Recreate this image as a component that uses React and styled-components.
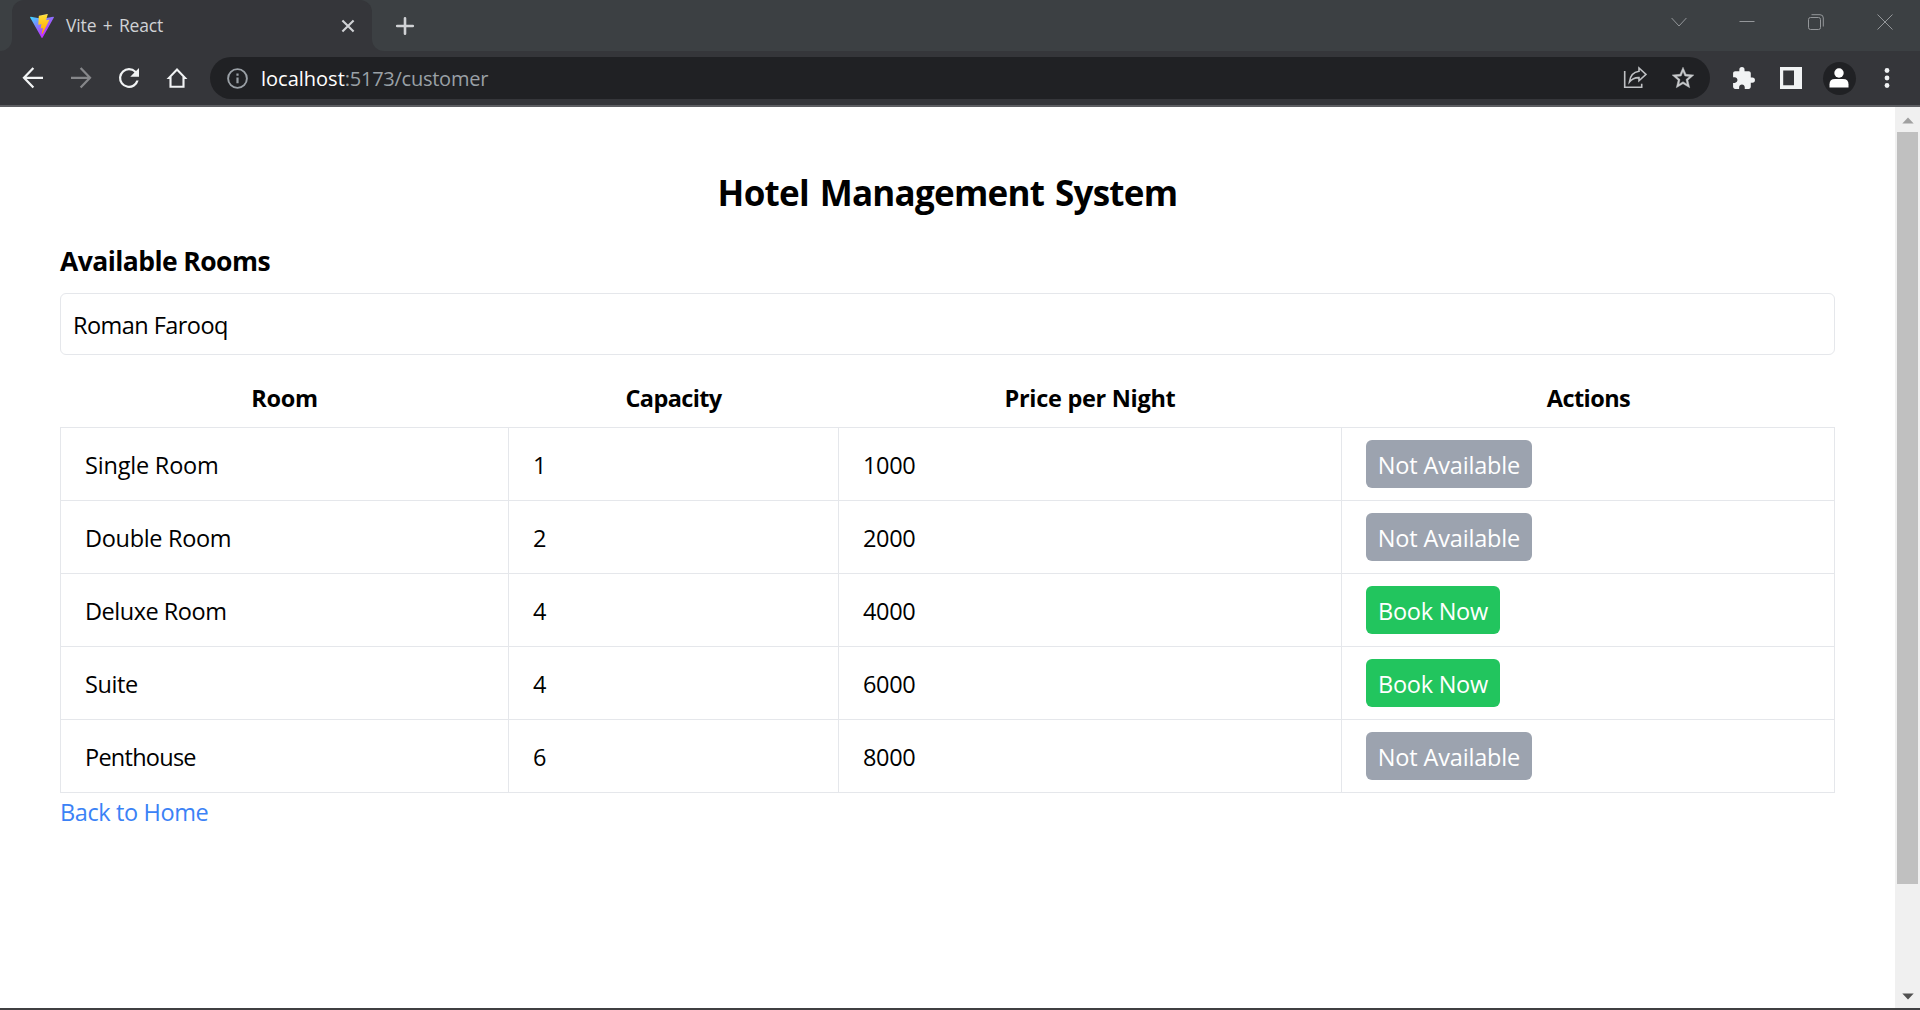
import React from 'react';
import styled, { createGlobalStyle } from 'styled-components';

const GlobalStyle = createGlobalStyle`
  *, *::before, *::after { box-sizing: border-box; }
  body {
    margin: 0;
    overflow: hidden;
    background: #fff;
    color: #000;
    font-family: "Open Sans", "Noto Sans", sans-serif;
  }
`;

const Window = styled.div`
  display: flex;
  flex-direction: column;
  height: 1010px;
  border-bottom: 2px solid #404042;
`;

/* ---------- tab strip ---------- */

const TabStrip = styled.header`
  display: flex;
  height: 51px;
  flex: none;
  background: #3c4043;
`;

const TabEdge = styled.div`
  width: 12px;
  background: #35363a;
  &::before {
    content: "";
    display: block;
    height: 100%;
    background: #3c4043;
    border-radius: ${(p) => (p.$side === 'left' ? '0 0 12px 0' : '0 0 0 12px')};
  }
`;

const Tab = styled.div`
  display: flex;
  align-items: center;
  width: 360px;
  padding: 0 15px 0 18px;
  background: #35363a;
  border-radius: 12px 12px 0 0;
`;

const TabTitle = styled.span`
  flex: 1;
  margin-left: 12px;
  padding-bottom: 1px;
  color: #d0d2d5;
  font-size: 17.5px;
  letter-spacing: -0.15px;
  word-spacing: 2px;
  line-height: 24px;
`;

const NewTab = styled.div`
  display: flex;
  align-items: center;
  margin-left: 10px;
`;

const WindowControls = styled.div`
  display: flex;
  height: 43px;
  margin-left: auto;
  padding-right: 1px;
`;

const ControlSlot = styled.div`
  display: flex;
  align-items: center;
  justify-content: center;
  width: 68.7px;
`;

/* ---------- toolbar ---------- */

const Toolbar = styled.div`
  display: flex;
  align-items: center;
  flex: none;
  height: 56px;
  padding: 0 9px 0 18px;
  background: #35363a;
  border-bottom: 2px solid #5d5e62;
`;

const NavGroup = styled.nav`
  display: flex;
  gap: 18px;
  margin-right: 18px;
`;

const AddressBar = styled.div`
  display: flex;
  align-items: center;
  flex: 1;
  height: 42px;
  padding: 0 14px 0 16px;
  border-radius: 21px;
  background: #202124;
`;

const Url = styled.div`
  flex: 1;
  margin-left: 11px;
  padding-top: 2px;
  color: #9aa0a6;
  font-size: 20px;
  line-height: 28px;
  letter-spacing: -0.25px;
`;

const Host = styled.span`
  color: #fff;
  letter-spacing: 0;
`;

const AddressActions = styled.div`
  display: flex;
  align-items: center;
  gap: 23px;
`;

const ToolGroup = styled.div`
  display: flex;
  margin-left: 9px;
`;

const ToolSlot = styled.div`
  display: flex;
  align-items: center;
  justify-content: center;
  width: 48px;
  height: 42px;
`;

const Avatar = styled.div`
  display: flex;
  align-items: center;
  justify-content: center;
  width: 33px;
  height: 33px;
  border-radius: 50%;
  background: #202124;
`;

const Icon = styled.svg`
  display: block;
  flex: none;
  width: ${(p) => p.$size}px;
  height: ${(p) => p.$size}px;
  color: ${(p) => p.$color || '#f1f3f4'};
`;

/* ---------- page ---------- */

const Viewport = styled.div`
  display: flex;
  flex: 1;
  min-height: 0;
`;

const Page = styled.main`
  flex: 1;
  padding: 59px 60px 0;
`;

const Title = styled.h1`
  margin: 0 0 23px;
  font-size: 35px;
  font-weight: 700;
  line-height: 54px;
  letter-spacing: -0.74px;
  word-spacing: 2.4px;
  text-align: center;
`;

const Subtitle = styled.h2`
  margin: 0 0 14px;
  font-size: 26.5px;
  font-weight: 700;
  line-height: 36px;
  letter-spacing: -0.56px;
`;

const NameInput = styled.input`
  display: block;
  width: 100%;
  height: 62px;
  margin-bottom: 12px;
  padding: 1px 12px 0;
  border: 1px solid #e5e7eb;
  border-radius: 6px;
  outline: none;
  background: #fff;
  color: #000;
  font-family: inherit;
  font-size: 23.5px;
  letter-spacing: -0.55px;
`;

const RoomTable = styled.div`
  font-size: 23.5px;
`;

const TableRow = styled.div`
  display: grid;
  grid-template-columns: 448px 330px 503px 494px;
  height: 73px;
  border-top: 1px solid #e5e7eb;
  &:last-child {
    height: 74px;
    border-bottom: 1px solid #e5e7eb;
  }
`;

const HeadRow = styled(TableRow)`
  height: 60px;
  border-top: none;
`;

const HeadCell = styled.div`
  display: flex;
  align-items: center;
  justify-content: center;
  padding: 1px 0 0 1px;
  font-weight: 700;
  letter-spacing: ${(p) => p.$tracking}px;
`;

const Cell = styled.div`
  display: flex;
  align-items: center;
  padding: 1px 24px 0;
  border-left: 1px solid #e5e7eb;
  letter-spacing: ${(p) => p.$tracking ?? -0.37}px;
`;

const ActionCell = styled(Cell)`
  padding: 0 24px;
  border-right: 1px solid #e5e7eb;
`;

const ActionButton = styled.button`
  width: ${(p) => (p.$open ? 134 : 166)}px;
  height: 48px;
  padding: 1px 0 0;
  border: 0;
  border-radius: 6px;
  background: ${(p) => (p.$open ? '#22c55e' : '#9ca3af')};
  color: #fff;
  font-family: inherit;
  font-size: 23.5px;
  letter-spacing: ${(p) => (p.$open ? -0.26 : -0.16)}px;
  white-space: nowrap;
`;

const HomeLink = styled.a`
  display: inline-block;
  color: #3b82f6;
  font-size: 23.5px;
  line-height: 38px;
  letter-spacing: -0.38px;
  text-decoration: none;
`;

/* ---------- scrollbar ---------- */

const Scrollbar = styled.aside`
  display: flex;
  flex-direction: column;
  align-items: center;
  width: 25px;
  background: #f0f0f0;
`;

const ScrollArrow = styled.div`
  display: flex;
  align-items: center;
  justify-content: center;
  height: 25px;
`;

const ScrollThumb = styled.div`
  width: 21px;
  height: 752px;
  margin-bottom: auto;
  background: #c0c0c0;
`;

const ViteLogo = () => (
  <Icon $size={24} viewBox="0 0 256 257">
    <defs>
      <linearGradient id="vShape" x1="-.8%" x2="57.6%" y1="7.7%" y2="78.4%">
        <stop offset="0%" stopColor="#41D1FF" />
        <stop offset="100%" stopColor="#BD34FE" />
      </linearGradient>
      <linearGradient id="vBolt" x1="43.4%" x2="50.3%" y1="2.2%" y2="89%">
        <stop offset="0%" stopColor="#FFEA83" />
        <stop offset="8.3%" stopColor="#FFDD35" />
        <stop offset="100%" stopColor="#FFA800" />
      </linearGradient>
    </defs>
    <path fill="url(#vShape)" d="M255.153 37.938 134.897 252.976c-2.483 4.44-8.862 4.466-11.382.048L.875 37.958c-2.746-4.814 1.371-10.646 6.827-9.67l120.385 21.517a6.537 6.537 0 0 0 2.322-.004l117.867-21.483c5.438-.991 9.574 4.796 6.877 9.62Z" />
    <path fill="url(#vBolt)" d="M185.432.063 96.44 17.501a3.268 3.268 0 0 0-2.634 3.014l-5.474 92.456a3.268 3.268 0 0 0 3.997 3.378l24.777-5.718c2.318-.535 4.413 1.507 3.936 3.838l-7.361 36.047c-.495 2.426 1.782 4.5 4.151 3.78l15.304-4.649c2.372-.72 4.652 1.36 4.15 3.788l-11.698 56.621c-.732 3.542 3.979 5.473 5.943 2.437l1.313-2.028 72.516-144.72c1.215-2.423-.88-5.186-3.54-4.672l-25.505 4.922c-2.396.462-4.435-1.77-3.759-4.114l16.646-57.705c.677-2.35-1.37-4.583-3.769-4.113Z" />
  </Icon>
);

const rooms = [
  { name: 'Single Room', capacity: 1, price: 1000, open: false, tracking: -0.2 },
  { name: 'Double Room', capacity: 2, price: 2000, open: false, tracking: -0.32 },
  { name: 'Deluxe Room', capacity: 4, price: 4000, open: true, tracking: -0.48 },
  { name: 'Suite', capacity: 4, price: 6000, open: true, tracking: -0.4 },
  { name: 'Penthouse', capacity: 6, price: 8000, open: false, tracking: -0.74 },
];

const columns = [
  ['Room', -0.3],
  ['Capacity', -0.63],
  ['Price per Night', -0.3],
  ['Actions', -0.57],
];

const line = { fill: 'none', stroke: 'currentColor' };

export default function App() {
  return (
    <Window>
      <GlobalStyle />
      <TabStrip>
        <TabEdge $side="left" />
        <Tab>
          <ViteLogo />
          <TabTitle>Vite + React</TabTitle>
          <Icon $size={18} $color="#d0d2d5" viewBox="0 0 18 18">
            <path {...line} strokeWidth="2.1" d="M3.4 3.4 14.6 14.6M14.6 3.4 3.4 14.6" />
          </Icon>
        </Tab>
        <TabEdge $side="right" />
        <NewTab>
          <Icon $size={22} $color="#d0d2d5" viewBox="0 0 22 22">
            <path {...line} strokeWidth="2.6" strokeLinecap="round" d="M11 3.2V18.8M3.2 11H18.8" />
          </Icon>
        </NewTab>
        <WindowControls>
          <ControlSlot>
            <Icon $size={16} $color="#94979a" viewBox="0 0 16 16">
              <path {...line} d="M.6 4 8 12 15.4 4" />
            </Icon>
          </ControlSlot>
          <ControlSlot>
            <Icon $size={16} $color="#94979a" viewBox="0 0 16 16">
              <path {...line} d="M.5 7.5H15.5" />
            </Icon>
          </ControlSlot>
          <ControlSlot>
            <Icon $size={16} $color="#94979a" viewBox="0 0 16 16">
              <rect {...line} x=".5" y="3.5" width="12" height="12" rx="2" />
              <path {...line} d="M3.5 .7H12Q15.3 .7 15.3 4V12.5" />
            </Icon>
          </ControlSlot>
          <ControlSlot>
            <Icon $size={16} $color="#94979a" viewBox="0 0 16 16">
              <path {...line} d="M.5 .5 15.5 15.5M15.5 .5 .5 15.5" />
            </Icon>
          </ControlSlot>
        </WindowControls>
      </TabStrip>

      <Toolbar>
        <NavGroup>
          <Icon $size={30} viewBox="0 0 24 24">
            <path {...line} strokeWidth="1.8" d="M20 11.8H5M12.3 4 4.8 11.8 12.3 19.6" />
          </Icon>
          <Icon $size={30} $color="#86878a" viewBox="0 0 24 24">
            <path {...line} strokeWidth="1.8" d="M4 11.8H19M11.7 4 19.2 11.8 11.7 19.6" />
          </Icon>
          <Icon $size={30} viewBox="0 0 24 24">
            <path fill="currentColor" d="M17.65 6.35A7.96 7.96 0 0 0 12 4a8 8 0 1 0 7.73 10h-1.9A6.2 6.2 0 1 1 12 5.8c1.72 0 3.24.71 4.36 1.84L13 11h7V4l-2.35 2.35z" />
          </Icon>
          <Icon $size={30} viewBox="0 0 24 24">
            <path {...line} strokeWidth="1.7" d="M5.6 11.9 12 5.2 18.4 11.9H17.2V19H6.8V11.9Z" />
          </Icon>
        </NavGroup>
        <AddressBar>
          <Icon $size={24} $color="#9aa0a6" viewBox="0 0 24 24">
            <circle {...line} cx="11.5" cy="12.5" r="9.4" strokeWidth="1.9" />
            <path {...line} strokeWidth="2.2" d="M11.5 11.4V17.2M11.5 7.6V9.8" />
          </Icon>
          <Url><Host>localhost</Host>:5173/customer</Url>
          <AddressActions>
            <Icon $size={24} $color="#bfc1c4" viewBox="0 0 24 24">
              <path {...line} strokeWidth="1.6" d="M1.7 5V21.3H18.7V17.8" />
              <path {...line} strokeWidth="1.6" d="M6.4 16C7.2 9.6 10.6 6 16 5.3V2L23 8.4 16 14.8V11.6C11.8 11.4 9 12.8 6.4 16Z" />
            </Icon>
            <Icon $size={26} $color="#c8cacc" viewBox="0 0 24 24">
              <path fill="currentColor" stroke="currentColor" strokeWidth=".4" d="m22 9.24-7.19-.62L12 2 9.19 8.63 2 9.24l5.46 4.73L5.82 21 12 17.27 18.18 21l-1.63-7.03L22 9.24zM12 15.4l-3.76 2.27 1-4.28-3.32-2.88 4.38-.38L12 6.1l1.71 4.04 4.38.38-3.32 2.88 1 4.28L12 15.4z" />
            </Icon>
          </AddressActions>
        </AddressBar>
        <ToolGroup>
          <ToolSlot>
            <Icon $size={25} viewBox="0 0 24 24">
              <path fill="currentColor" d="M20.5 11H19V7c0-1.1-.9-2-2-2h-4V3.5a2.5 2.5 0 0 0-5 0V5H4c-1.1 0-1.99.9-1.99 2v3.8H3.5c1.49 0 2.7 1.21 2.7 2.7s-1.21 2.7-2.7 2.7H2V20c0 1.1.9 2 2 2h3.8v-1.5c0-1.49 1.21-2.7 2.7-2.7s2.7 1.21 2.7 2.7V22H17c1.1 0 2-.9 2-2v-4h1.5a2.5 2.5 0 0 0 0-5z" />
            </Icon>
          </ToolSlot>
          <ToolSlot>
            <Icon $size={22} viewBox="0 0 22 22">
              <path fill="currentColor" fillRule="evenodd" d="M0 0H22V22H0ZM3.2 3.6V18.2H14V3.6Z" />
            </Icon>
          </ToolSlot>
          <ToolSlot>
            <Avatar>
              <Icon $size={22} $color="#fff" viewBox="0 0 22 22">
                <circle fill="currentColor" cx="11" cy="6" r="4.7" />
                <path fill="currentColor" d="M1.5 20.5V17.3Q1.5 12 7 12H15Q20.5 12 20.5 17.3V20.5Z" />
              </Icon>
            </Avatar>
          </ToolSlot>
          <ToolSlot>
            <Icon $size={24} viewBox="0 0 24 24">
              <g fill="currentColor">
                <circle cx="12" cy="4.5" r="2.4" />
                <circle cx="12" cy="12" r="2.4" />
                <circle cx="12" cy="19.5" r="2.4" />
              </g>
            </Icon>
          </ToolSlot>
        </ToolGroup>
      </Toolbar>

      <Viewport>
        <Page>
          <Title>Hotel Management System</Title>
          <Subtitle>Available Rooms</Subtitle>
          <NameInput defaultValue="Roman Farooq" />
          <RoomTable>
            <HeadRow>
              {columns.map(([label, tracking]) => (
                <HeadCell key={label} $tracking={tracking}>{label}</HeadCell>
              ))}
            </HeadRow>
            {rooms.map((room) => (
              <TableRow key={room.name}>
                <Cell $tracking={room.tracking}>{room.name}</Cell>
                <Cell>{room.capacity}</Cell>
                <Cell>{room.price}</Cell>
                <ActionCell>
                  <ActionButton $open={room.open}>{room.open ? 'Book Now' : 'Not Available'}</ActionButton>
                </ActionCell>
              </TableRow>
            ))}
          </RoomTable>
          <HomeLink>Back to Home</HomeLink>
        </Page>
        <Scrollbar>
          <ScrollArrow>
            <Icon $size={12} $color="#a0a0a0" viewBox="0 0 12 12">
              <path fill="currentColor" d="M.3 9.5 6 3.4 11.7 9.5Z" />
            </Icon>
          </ScrollArrow>
          <ScrollThumb />
          <ScrollArrow>
            <Icon $size={12} $color="#505050" viewBox="0 0 12 12">
              <path fill="currentColor" d="M.3 3.5 6 9.6 11.7 3.5Z" />
            </Icon>
          </ScrollArrow>
        </Scrollbar>
      </Viewport>
    </Window>
  );
}
